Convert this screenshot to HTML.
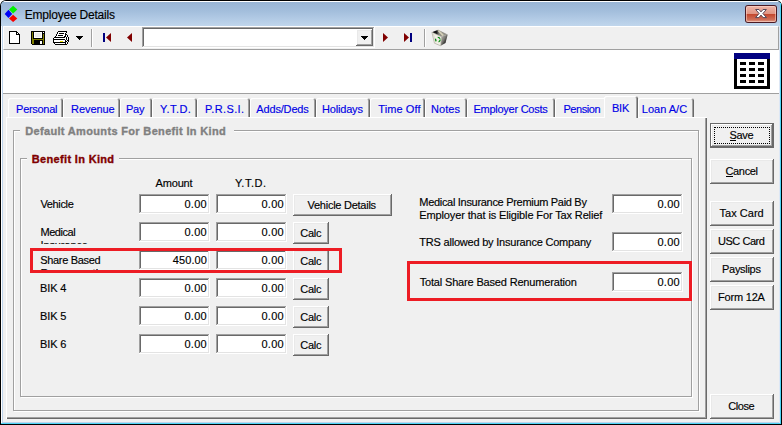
<!DOCTYPE html>
<html><head><meta charset="utf-8"><title>Employee Details</title>
<style>
html,body{margin:0;padding:0;background:#fff}
body{width:782px;height:425px;position:relative;overflow:hidden;font-family:"Liberation Sans",sans-serif;font-size:11px;color:#000}
div,span,svg{position:absolute;box-sizing:border-box}
.t{white-space:pre;line-height:13px;-webkit-text-stroke:0.15px currentColor}
.btn{background:#f0f0f0;box-shadow:inset -1px -1px 0 #696969,inset 1px 1px 0 #fff,inset -2px -2px 0 #a0a0a0,inset 2px 2px 0 #e9e9e9}
.inp{background:#fff;box-shadow:inset -1px -1px 0 #fff,inset 1px 1px 0 #a0a0a0,inset -2px -2px 0 #e3e3e3,inset 2px 2px 0 #696969}
.grp{border:1px solid #a0a0a0;box-shadow:1px 1px 0 #fff,inset 1px 1px 0 #fff}
.red{border:3px solid #ed1c24}
.tab{background:#f0f0f0;border-radius:2px 3px 0 0;box-shadow:inset 1px 1px 0 #fff,inset -1px 0 0 #696969,inset -2px 0 0 #a0a0a0}
</style></head><body>

<div style="left:0;top:0;width:782px;height:425px;background:#000;border-radius:6px 6px 0 0"></div>
<div style="left:1px;top:1px;width:780px;height:423px;background:#4fd5f6;border-radius:5px 5px 0 0"></div>
<div style="left:1px;top:1px;width:779px;height:422px;background:#bdd3eb;border-radius:5px 4px 0 0"></div>
<div style="left:1px;top:6px;width:1px;height:417px;background:#fff"></div>
<div style="left:1px;top:1px;width:780px;height:25px;border-radius:5px 5px 0 0;background:linear-gradient(#fff 0,#fff 1px,#99b5d5 1px,#a3bedc 40%,#b4cce6 75%,#c0d6ec 100%)"></div>
<div style="left:779px;top:26px;width:1px;height:397px;background:#dde7f5"></div>
<div style="left:780px;top:3px;width:1px;height:421px;background:#4fd5f6"></div>
<div style="left:3px;top:26px;width:776px;height:396px;background:#f0f0f0"></div>
<svg style="left:4px;top:4px" width="18" height="20" viewBox="4 4 18 20"><polygon points="13.1,5.7 17.3,9.55 13.1,13.4 9,9.55" fill="#00f000"/><polygon points="8.45,9.8 12.2,13.95 8.45,18.1 4.7,13.95" fill="#0000f8"/><polygon points="13.1,14.7 17.3,18.4 13.1,22.1 9,18.4" fill="#f80000"/></svg>
<span class="t" style="left:24.80px;top:8.34px;letter-spacing:-0.212px;color:#000;font-size:12px;line-height:15px;">Employee Details</span>
<div style="left:745px;top:5px;width:32px;height:18px;border-radius:3px;background:#4a1a24"></div>
<div style="left:746px;top:6px;width:30px;height:16px;border-radius:2px;background:linear-gradient(#eeb5a8 0,#e19583 48%,#c3452b 50%,#cf6f58 85%,#e2a08f 100%);box-shadow:inset 0 0 0 1px rgba(255,220,210,.55)"></div>
<svg style="left:754px;top:8px" width="14" height="12" viewBox="0 0 14 12"><path d="M1.6,1.5 L5,1.5 L7,3.9 L9,1.5 L12.4,1.5 L8.9,5.5 L12.5,9.6 L9.1,9.6 L7,7.1 L4.9,9.6 L1.5,9.6 L5.1,5.5 Z" fill="#fff" stroke="#55495a" stroke-width="1" stroke-linejoin="round"/></svg>
<div style="left:3px;top:26px;width:776px;height:24px;background:#f0f0f0;border-top:1px solid #fff;border-left:1px solid #fff;border-bottom:1px solid #a0a0a0;border-right:1px solid #a0a0a0"></div>
<div style="left:3px;top:50px;width:776px;height:43px;background:#fff"></div>
<div style="left:3px;top:93px;width:776px;height:1px;background:#a0a0a0"></div>
<svg style="left:9px;top:31px" width="12" height="14" viewBox="0 0 12 14" shape-rendering="crispEdges"><path d="M0.5,0.5 H7.5 L10.5,3.5 V12.5 H0.5 Z" fill="#fff" stroke="#000"/><path d="M7.5,0.5 V3.5 H10.5" fill="none" stroke="#000"/></svg>
<svg style="left:31px;top:31px" width="14" height="14" viewBox="0 0 14 14" shape-rendering="crispEdges"><rect x="0" y="0" width="14" height="1" fill="#000"/><rect x="0" y="1" width="1" height="1" fill="#000"/><rect x="1" y="1" width="1" height="1" fill="#808000"/><rect x="2" y="1" width="1" height="1" fill="#000"/><rect x="3" y="1" width="8" height="1" fill="#fff"/><rect x="11" y="1" width="1" height="1" fill="#000"/><rect x="12" y="1" width="1" height="1" fill="#fff"/><rect x="13" y="1" width="1" height="1" fill="#000"/><rect x="0" y="2" width="1" height="1" fill="#000"/><rect x="1" y="2" width="1" height="1" fill="#808000"/><rect x="2" y="2" width="1" height="1" fill="#000"/><rect x="3" y="2" width="1" height="1" fill="#fff"/><rect x="4" y="2" width="6" height="1" fill="#ececec"/><rect x="10" y="2" width="1" height="1" fill="#fff"/><rect x="11" y="2" width="3" height="1" fill="#000"/><rect x="0" y="3" width="1" height="1" fill="#000"/><rect x="1" y="3" width="1" height="1" fill="#808000"/><rect x="2" y="3" width="1" height="1" fill="#000"/><rect x="3" y="3" width="1" height="1" fill="#fff"/><rect x="4" y="3" width="6" height="1" fill="#ececec"/><rect x="10" y="3" width="1" height="1" fill="#fff"/><rect x="11" y="3" width="1" height="1" fill="#000"/><rect x="12" y="3" width="1" height="1" fill="#808000"/><rect x="13" y="3" width="1" height="1" fill="#000"/><rect x="0" y="4" width="1" height="1" fill="#000"/><rect x="1" y="4" width="1" height="1" fill="#808000"/><rect x="2" y="4" width="1" height="1" fill="#000"/><rect x="3" y="4" width="1" height="1" fill="#fff"/><rect x="4" y="4" width="6" height="1" fill="#ececec"/><rect x="10" y="4" width="1" height="1" fill="#fff"/><rect x="11" y="4" width="1" height="1" fill="#000"/><rect x="12" y="4" width="1" height="1" fill="#808000"/><rect x="13" y="4" width="1" height="1" fill="#000"/><rect x="0" y="5" width="1" height="1" fill="#000"/><rect x="1" y="5" width="1" height="1" fill="#808000"/><rect x="2" y="5" width="1" height="1" fill="#000"/><rect x="3" y="5" width="1" height="1" fill="#fff"/><rect x="4" y="5" width="6" height="1" fill="#ececec"/><rect x="10" y="5" width="1" height="1" fill="#fff"/><rect x="11" y="5" width="1" height="1" fill="#000"/><rect x="12" y="5" width="1" height="1" fill="#808000"/><rect x="13" y="5" width="1" height="1" fill="#000"/><rect x="0" y="6" width="1" height="1" fill="#000"/><rect x="1" y="6" width="1" height="1" fill="#808000"/><rect x="2" y="6" width="1" height="1" fill="#000"/><rect x="3" y="6" width="8" height="1" fill="#fff"/><rect x="11" y="6" width="1" height="1" fill="#000"/><rect x="12" y="6" width="1" height="1" fill="#808000"/><rect x="13" y="6" width="1" height="1" fill="#000"/><rect x="0" y="7" width="1" height="1" fill="#000"/><rect x="1" y="7" width="1" height="1" fill="#808000"/><rect x="2" y="7" width="10" height="1" fill="#000"/><rect x="12" y="7" width="1" height="1" fill="#808000"/><rect x="13" y="7" width="1" height="1" fill="#000"/><rect x="0" y="8" width="1" height="1" fill="#000"/><rect x="1" y="8" width="12" height="1" fill="#808000"/><rect x="13" y="8" width="1" height="1" fill="#000"/><rect x="0" y="9" width="1" height="1" fill="#000"/><rect x="1" y="9" width="2" height="1" fill="#808000"/><rect x="3" y="9" width="9" height="1" fill="#000"/><rect x="12" y="9" width="1" height="1" fill="#808000"/><rect x="13" y="9" width="1" height="1" fill="#000"/><rect x="0" y="10" width="1" height="1" fill="#000"/><rect x="1" y="10" width="2" height="1" fill="#808000"/><rect x="3" y="10" width="6" height="1" fill="#000"/><rect x="9" y="10" width="2" height="1" fill="#fff"/><rect x="11" y="10" width="1" height="1" fill="#000"/><rect x="12" y="10" width="1" height="1" fill="#808000"/><rect x="13" y="10" width="1" height="1" fill="#000"/><rect x="0" y="11" width="1" height="1" fill="#000"/><rect x="1" y="11" width="2" height="1" fill="#808000"/><rect x="3" y="11" width="6" height="1" fill="#000"/><rect x="9" y="11" width="2" height="1" fill="#fff"/><rect x="11" y="11" width="1" height="1" fill="#000"/><rect x="12" y="11" width="1" height="1" fill="#808000"/><rect x="13" y="11" width="1" height="1" fill="#000"/><rect x="0" y="12" width="1" height="1" fill="#000"/><rect x="1" y="12" width="2" height="1" fill="#808000"/><rect x="3" y="12" width="6" height="1" fill="#000"/><rect x="9" y="12" width="2" height="1" fill="#fff"/><rect x="11" y="12" width="1" height="1" fill="#000"/><rect x="12" y="12" width="1" height="1" fill="#808000"/><rect x="13" y="12" width="1" height="1" fill="#000"/><rect x="1" y="13" width="13" height="1" fill="#000"/></svg>
<svg style="left:53px;top:31px" width="17" height="14" viewBox="0 0 17 14" shape-rendering="crispEdges"><rect x="5" y="0" width="9" height="1" fill="#000"/><rect x="4" y="1" width="1" height="1" fill="#000"/><rect x="5" y="1" width="8" height="1" fill="#fff"/><rect x="13" y="1" width="1" height="1" fill="#000"/><rect x="4" y="2" width="1" height="1" fill="#000"/><rect x="5" y="2" width="1" height="1" fill="#fff"/><rect x="6" y="2" width="5" height="1" fill="#000"/><rect x="11" y="2" width="1" height="1" fill="#fff"/><rect x="12" y="2" width="1" height="1" fill="#000"/><rect x="3" y="3" width="1" height="1" fill="#000"/><rect x="4" y="3" width="8" height="1" fill="#fff"/><rect x="12" y="3" width="2" height="1" fill="#000"/><rect x="3" y="4" width="1" height="1" fill="#000"/><rect x="4" y="4" width="1" height="1" fill="#fff"/><rect x="5" y="4" width="5" height="1" fill="#000"/><rect x="10" y="4" width="2" height="1" fill="#fff"/><rect x="12" y="4" width="1" height="1" fill="#000"/><rect x="13" y="4" width="1" height="1" fill="#fff"/><rect x="14" y="4" width="1" height="1" fill="#000"/><rect x="2" y="5" width="1" height="1" fill="#000"/><rect x="3" y="5" width="8" height="1" fill="#fff"/><rect x="11" y="5" width="2" height="1" fill="#000"/><rect x="13" y="5" width="1" height="1" fill="#fff"/><rect x="14" y="5" width="1" height="1" fill="#000"/><rect x="1" y="6" width="11" height="1" fill="#000"/><rect x="12" y="6" width="1" height="1" fill="#fff"/><rect x="13" y="6" width="1" height="1" fill="#000"/><rect x="14" y="6" width="1" height="1" fill="#fff"/><rect x="15" y="6" width="1" height="1" fill="#000"/><rect x="0" y="7" width="1" height="1" fill="#000"/><rect x="1" y="7" width="12" height="1" fill="#fff"/><rect x="13" y="7" width="1" height="1" fill="#000"/><rect x="14" y="7" width="1" height="1" fill="#fff"/><rect x="15" y="7" width="1" height="1" fill="#000"/><rect x="0" y="8" width="12" height="1" fill="#000"/><rect x="12" y="8" width="1" height="1" fill="#fff"/><rect x="13" y="8" width="1" height="1" fill="#000"/><rect x="14" y="8" width="1" height="1" fill="#fff"/><rect x="15" y="8" width="1" height="1" fill="#000"/><rect x="0" y="9" width="1" height="1" fill="#000"/><rect x="1" y="9" width="11" height="1" fill="#fff"/><rect x="12" y="9" width="1" height="1" fill="#000"/><rect x="13" y="9" width="1" height="1" fill="#fff"/><rect x="14" y="9" width="2" height="1" fill="#000"/><rect x="0" y="10" width="1" height="1" fill="#000"/><rect x="1" y="10" width="6" height="1" fill="#fff"/><rect x="7" y="10" width="3" height="1" fill="#e8e000"/><rect x="10" y="10" width="2" height="1" fill="#fff"/><rect x="12" y="10" width="2" height="1" fill="#000"/><rect x="14" y="10" width="1" height="1" fill="#fff"/><rect x="15" y="10" width="1" height="1" fill="#000"/><rect x="0" y="11" width="13" height="1" fill="#000"/><rect x="13" y="11" width="1" height="1" fill="#fff"/><rect x="14" y="11" width="1" height="1" fill="#000"/><rect x="1" y="12" width="1" height="1" fill="#000"/><rect x="2" y="12" width="10" height="1" fill="#fff"/><rect x="12" y="12" width="1" height="1" fill="#000"/><rect x="13" y="12" width="1" height="1" fill="#fff"/><rect x="14" y="12" width="1" height="1" fill="#000"/><rect x="2" y="13" width="12" height="1" fill="#000"/></svg>
<svg style="left:76px;top:36px" width="7" height="4" viewBox="0 0 7 4" shape-rendering="crispEdges"><path d="M0,0 H7 L3.5,4 Z" fill="#000"/></svg>
<div style="left:91px;top:29px;width:1px;height:18px;background:#a0a0a0"></div><div style="left:92px;top:29px;width:1px;height:18px;background:#fff"></div>
<div style="left:424px;top:29px;width:1px;height:18px;background:#a0a0a0"></div><div style="left:425px;top:29px;width:1px;height:18px;background:#fff"></div>
<svg style="left:103px;top:33px" width="9" height="9" viewBox="0 0 9 9"><rect x="0" y="0" width="2" height="9" fill="#000080"/><path d="M3,4.5 L8,0 V9 Z" fill="#800000"/></svg>
<svg style="left:127px;top:33px" width="6" height="9" viewBox="0 0 6 9"><path d="M0,4.5 L5,0 V9 Z" fill="#800000"/></svg>
<svg style="left:383px;top:33px" width="6" height="9" viewBox="0 0 6 9"><path d="M5,4.5 L0,0 V9 Z" fill="#800000"/></svg>
<svg style="left:404px;top:33px" width="9" height="9" viewBox="0 0 9 9"><rect x="6" y="0" width="2" height="9" fill="#000080"/><path d="M5,4.5 L0,0 V9 Z" fill="#800000"/></svg>
<div class="inp" style="left:142px;top:27px;width:233px;height:21px"></div>
<div class="btn" style="left:356px;top:29px;width:17px;height:17px"></div>
<svg style="left:361px;top:36px" width="7" height="4" viewBox="0 0 7 4" shape-rendering="crispEdges"><path d="M0,0 H7 L3.5,4 Z" fill="#000"/></svg>
<svg style="left:431px;top:29px" width="18" height="18" viewBox="0 0 18 18">
<defs><linearGradient id="rg" x1="0" y1="0" x2="1" y2="1"><stop offset="0" stop-color="#c4c2ba"/><stop offset=".45" stop-color="#7a7974"/><stop offset=".8" stop-color="#050505"/></linearGradient>
<linearGradient id="tg" x1="0" y1="0" x2="1" y2="0"><stop offset="0" stop-color="#000"/><stop offset=".3" stop-color="#1c1c1c"/><stop offset=".45" stop-color="#8a8880"/><stop offset="1" stop-color="#9c9a92"/></linearGradient></defs>
<path d="M0.9,3.2 L7.1,0.7 L16.7,5.5 L10.5,7.7 Z" fill="url(#tg)"/>
<path d="M6.3,1.4 L8.3,1.2 L13.2,6.3 L11.2,6.9 Z" fill="#d4d0b8"/>
<path d="M10.5,7.7 L16.7,5.5 L14.5,14 L9.7,16.8 Z" fill="url(#rg)"/>
<path d="M0.9,3.2 L10.5,7.7 L9.7,16.8 L3.5,14.2 Z" fill="#f1efe6" stroke="#a9a79c" stroke-width=".7"/>
<path d="M1.6,4 L3,4.6 L4.6,13.8 L3.6,13.6 Z" fill="#dcdacc"/>
<circle cx="6.9" cy="10.6" r="2.3" fill="none" stroke="#0b8a14" stroke-width="1.3" stroke-dasharray="2.6 2.2"/>
</svg>
<div style="left:734px;top:53px;width:36px;height:36px;background:#000"></div><div style="left:734px;top:53px;width:36px;height:6px;background:#000080"></div><div style="left:737px;top:59px;width:30px;height:27px;background:#fff"></div><div style="left:740px;top:62px;width:6px;height:3px;background:#000"></div><div style="left:740px;top:68px;width:6px;height:3px;background:#000"></div><div style="left:740px;top:74px;width:6px;height:3px;background:#000"></div><div style="left:740px;top:80px;width:6px;height:3px;background:#000"></div><div style="left:749px;top:62px;width:6px;height:3px;background:#000"></div><div style="left:749px;top:68px;width:6px;height:3px;background:#000"></div><div style="left:749px;top:74px;width:6px;height:3px;background:#000"></div><div style="left:749px;top:80px;width:6px;height:3px;background:#000"></div><div style="left:758px;top:62px;width:6px;height:3px;background:#000"></div><div style="left:758px;top:68px;width:6px;height:3px;background:#000"></div><div style="left:758px;top:74px;width:6px;height:3px;background:#000"></div><div style="left:758px;top:80px;width:6px;height:3px;background:#000"></div>
<div style="left:6px;top:117px;width:701px;height:302px;background:#f0f0f0;box-shadow:inset 1px 1px 0 #fff,inset -1px -1px 0 #696969,inset -2px -2px 0 #a0a0a0"></div>
<div class="tab" style="left:8px;top:98px;width:55px;height:19px"></div>
<div class="tab" style="left:63px;top:98px;width:57px;height:19px"></div>
<div class="tab" style="left:120px;top:98px;width:32px;height:19px"></div>
<div class="tab" style="left:152px;top:98px;width:45px;height:19px"></div>
<div class="tab" style="left:197px;top:98px;width:53px;height:19px"></div>
<div class="tab" style="left:250px;top:98px;width:66px;height:19px"></div>
<div class="tab" style="left:316px;top:98px;width:54px;height:19px"></div>
<div class="tab" style="left:370px;top:98px;width:55px;height:19px"></div>
<div class="tab" style="left:425px;top:98px;width:42px;height:19px"></div>
<div class="tab" style="left:467px;top:98px;width:88px;height:19px"></div>
<div class="tab" style="left:555px;top:98px;width:53px;height:19px"></div>
<div class="tab" style="left:638px;top:98px;width:56px;height:19px"></div>
<div class="tab" style="left:604px;top:96px;width:34px;height:22px"></div>
<div style="left:605px;top:117px;width:31px;height:2px;background:#f0f0f0"></div>
<span class="t" style="left:16.10px;top:102.69px;letter-spacing:-0.303px;color:#0000e6;">Personal</span>
<span class="t" style="left:71.10px;top:102.69px;letter-spacing:-0.091px;color:#0000e6;">Revenue</span>
<span class="t" style="left:126.10px;top:102.69px;letter-spacing:-0.334px;color:#0000e6;">Pay</span>
<span class="t" style="left:205.00px;top:102.69px;letter-spacing:0.374px;color:#0000e6;">P.R.S.I.</span>
<span class="t" style="left:256.30px;top:102.69px;letter-spacing:-0.164px;color:#0000e6;">Adds/Deds</span>
<span class="t" style="left:322.00px;top:102.69px;letter-spacing:-0.184px;color:#0000e6;">Holidays</span>
<span class="t" style="left:378.30px;top:102.69px;letter-spacing:0.091px;color:#0000e6;">Time Off</span>
<span class="t" style="left:431.00px;top:102.69px;letter-spacing:0.037px;color:#0000e6;">Notes</span>
<span class="t" style="left:473.40px;top:102.69px;letter-spacing:-0.249px;color:#0000e6;">Employer Costs</span>
<span class="t" style="left:563.40px;top:102.69px;letter-spacing:-0.411px;color:#0000e6;">Pension</span>
<span class="t" style="left:612.00px;top:101.69px;letter-spacing:-0.217px;color:#0000e6;">BIK</span>
<span class="t" style="left:641.80px;top:102.69px;letter-spacing:0.005px;color:#0000e6;">Loan A/C</span>
<span class="t" style="left:160.10px;top:102.69px;letter-spacing:0.454px;color:#0000e6;">Y.T.D.</span>
<div class="grp" style="left:13px;top:130px;width:686px;height:281px"></div>
<div style="left:20px;top:129px;width:214px;height:4px;background:#f0f0f0"></div>
<span class="t" style="left:25.20px;top:124.69px;letter-spacing:0.337px;color:#808080;font-weight:bold;-webkit-text-stroke:0.35px currentColor;">Default Amounts For Benefit In Kind</span>
<div class="grp" style="left:20px;top:158px;width:672px;height:239px"></div>
<div style="left:27px;top:157px;width:92px;height:4px;background:#f0f0f0"></div>
<span class="t" style="left:31.80px;top:152.69px;letter-spacing:0.335px;color:#800000;font-weight:bold;-webkit-text-stroke:0.35px currentColor;">Benefit In Kind</span>
<span class="t" style="left:155.50px;top:176.69px;letter-spacing:-0.164px;color:#000;">Amount</span>
<span class="t" style="left:234.90px;top:176.69px;letter-spacing:0.514px;color:#000;">Y.T.D.</span>
<div class="inp" style="left:139px;top:194px;width:71px;height:20px"></div>
<div class="inp" style="left:216px;top:194px;width:71px;height:20px"></div>
<div class="btn" style="left:293px;top:194px;width:99px;height:22px"></div>
<span class="t" style="left:184.40px;top:197.69px;letter-spacing:0.293px;color:#000;">0.00</span>
<span class="t" style="left:261.40px;top:197.69px;letter-spacing:0.293px;color:#000;">0.00</span>
<div class="inp" style="left:139px;top:222px;width:71px;height:20px"></div>
<div class="inp" style="left:216px;top:222px;width:71px;height:20px"></div>
<div class="btn" style="left:293px;top:222px;width:36px;height:22px"></div>
<span class="t" style="left:300.30px;top:226.69px;letter-spacing:-0.272px;color:#000;">Calc</span>
<span class="t" style="left:184.40px;top:225.69px;letter-spacing:0.293px;color:#000;">0.00</span>
<span class="t" style="left:261.40px;top:225.69px;letter-spacing:0.293px;color:#000;">0.00</span>
<div class="inp" style="left:139px;top:250px;width:71px;height:20px"></div>
<div class="inp" style="left:216px;top:250px;width:71px;height:20px"></div>
<div class="btn" style="left:293px;top:250px;width:36px;height:22px"></div>
<span class="t" style="left:300.30px;top:254.69px;letter-spacing:-0.272px;color:#000;">Calc</span>
<span class="t" style="left:172.70px;top:253.69px;letter-spacing:0.129px;color:#000;">450.00</span>
<span class="t" style="left:261.40px;top:253.69px;letter-spacing:0.293px;color:#000;">0.00</span>
<div class="inp" style="left:139px;top:278px;width:71px;height:20px"></div>
<div class="inp" style="left:216px;top:278px;width:71px;height:20px"></div>
<div class="btn" style="left:293px;top:278px;width:36px;height:22px"></div>
<span class="t" style="left:300.30px;top:282.69px;letter-spacing:-0.272px;color:#000;">Calc</span>
<span class="t" style="left:184.40px;top:281.69px;letter-spacing:0.293px;color:#000;">0.00</span>
<span class="t" style="left:261.40px;top:281.69px;letter-spacing:0.293px;color:#000;">0.00</span>
<div class="inp" style="left:139px;top:306px;width:71px;height:20px"></div>
<div class="inp" style="left:216px;top:306px;width:71px;height:20px"></div>
<div class="btn" style="left:293px;top:306px;width:36px;height:22px"></div>
<span class="t" style="left:300.30px;top:310.69px;letter-spacing:-0.272px;color:#000;">Calc</span>
<span class="t" style="left:184.40px;top:309.69px;letter-spacing:0.293px;color:#000;">0.00</span>
<span class="t" style="left:261.40px;top:309.69px;letter-spacing:0.293px;color:#000;">0.00</span>
<div class="inp" style="left:139px;top:334px;width:71px;height:20px"></div>
<div class="inp" style="left:216px;top:334px;width:71px;height:20px"></div>
<div class="btn" style="left:293px;top:334px;width:36px;height:22px"></div>
<span class="t" style="left:300.30px;top:338.69px;letter-spacing:-0.272px;color:#000;">Calc</span>
<span class="t" style="left:184.40px;top:337.69px;letter-spacing:0.293px;color:#000;">0.00</span>
<span class="t" style="left:261.40px;top:337.69px;letter-spacing:0.293px;color:#000;">0.00</span>
<span class="t" style="left:307.50px;top:198.69px;letter-spacing:-0.254px;color:#000;">Vehicle Details</span>
<span class="t" style="left:40.50px;top:197.69px;letter-spacing:-0.364px;color:#000;">Vehicle</span>
<span class="t" style="left:40.50px;top:225.69px;letter-spacing:-0.468px;color:#000;">Medical</span>
<span class="t" style="left:40.20px;top:253.69px;letter-spacing:-0.321px;color:#000;">Share Based</span>
<span class="t" style="left:40.10px;top:281.69px;letter-spacing:-0.127px;color:#000;">BIK 4</span>
<span class="t" style="left:40.10px;top:309.69px;letter-spacing:-0.127px;color:#000;">BIK 5</span>
<span class="t" style="left:40.10px;top:337.69px;letter-spacing:-0.127px;color:#000;">BIK 6</span>
<div style="left:38px;top:238px;width:96px;height:6px;overflow:hidden"><span class="t" style="left:2.50px;top:0.69px;letter-spacing:-0.114px;color:#000;">Insurance</span></div>
<div style="left:38px;top:266px;width:96px;height:6px;overflow:hidden"><span class="t" style="left:2.50px;top:0.69px;letter-spacing:0.082px;color:#000;">Renumeration</span></div>
<div class="inp" style="left:612px;top:194px;width:71px;height:20px"></div>
<span class="t" style="left:657.40px;top:197.69px;letter-spacing:0.293px;color:#000;">0.00</span>
<div class="inp" style="left:612px;top:232px;width:71px;height:20px"></div>
<span class="t" style="left:657.40px;top:235.69px;letter-spacing:0.293px;color:#000;">0.00</span>
<div class="inp" style="left:612px;top:272px;width:71px;height:20px"></div>
<span class="t" style="left:657.40px;top:275.69px;letter-spacing:0.293px;color:#000;">0.00</span>
<span class="t" style="left:419.30px;top:195.69px;letter-spacing:-0.303px;color:#000;">Medical Insurance Premium Paid By</span>
<span class="t" style="left:419.30px;top:208.69px;letter-spacing:-0.131px;color:#000;">Employer that is Eligible For Tax Relief</span>
<span class="t" style="left:419.30px;top:235.69px;letter-spacing:-0.211px;color:#000;">TRS allowed by Insurance Company</span>
<span class="t" style="left:419.70px;top:275.69px;letter-spacing:-0.167px;color:#000;">Total Share Based Renumeration</span>
<div class="red" style="left:30px;top:248px;width:312px;height:25px"></div>
<div class="red" style="left:407px;top:261px;width:285px;height:40px"></div>
<div style="left:710px;top:123px;width:64px;height:25px;background:#696969"></div><div class="btn" style="left:711px;top:124px;width:62px;height:23px"></div>
<div style="left:714px;top:127px;width:56px;height:17px;border:1px dotted #000"></div>
<div class="btn" style="left:710px;top:159px;width:64px;height:25px"></div>
<div class="btn" style="left:710px;top:201px;width:64px;height:25px"></div>
<div class="btn" style="left:710px;top:229px;width:64px;height:25px"></div>
<div class="btn" style="left:710px;top:257px;width:64px;height:25px"></div>
<div class="btn" style="left:710px;top:285px;width:64px;height:25px"></div>
<div class="btn" style="left:710px;top:394px;width:64px;height:25px"></div>
<span class="t" style="left:729.50px;top:128.69px;letter-spacing:-0.359px;color:#000;">Save</span>
<span class="t" style="left:725.50px;top:164.69px;letter-spacing:-0.350px;color:#000;">Cancel</span>
<div style="left:730px;top:140px;width:6px;height:1px;background:#000"></div><div style="left:726px;top:176px;width:7px;height:1px;background:#000"></div>
<span class="t" style="left:719.50px;top:206.69px;letter-spacing:0.024px;color:#000;">Tax Card</span>
<span class="t" style="left:718.00px;top:234.69px;letter-spacing:-0.461px;color:#000;">USC Card</span>
<span class="t" style="left:722.10px;top:262.69px;letter-spacing:-0.310px;color:#000;">Payslips</span>
<span class="t" style="left:718.00px;top:290.69px;letter-spacing:-0.200px;color:#000;">Form 12A</span>
<span class="t" style="left:728.30px;top:399.69px;letter-spacing:-0.431px;color:#000;">Close</span>
</body></html>
